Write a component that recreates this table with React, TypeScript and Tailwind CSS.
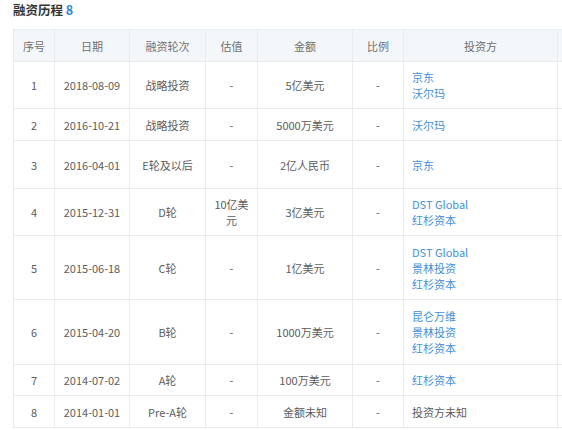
const ROWS = [
  { no: 1, date: "2018-08-09", round: "战略投资", value: "-", amount: "5亿美元", ratio: "-", investors: ["京东", "沃尔玛"], h: "h-[47px]" },
  { no: 2, date: "2016-10-21", round: "战略投资", value: "-", amount: "5000万美元", ratio: "-", investors: ["沃尔玛"], h: "h-[32px]" },
  { no: 3, date: "2016-04-01", round: "E轮及以后", value: "-", amount: "2亿人民币", ratio: "-", investors: ["京东"], h: "h-[48px]" },
  { no: 4, date: "2015-12-31", round: "D轮", value: "10亿美元", amount: "3亿美元", ratio: "-", investors: ["DST Global", "红杉资本"], h: "h-[47px]" },
  { no: 5, date: "2015-06-18", round: "C轮", value: "-", amount: "1亿美元", ratio: "-", investors: ["DST Global", "景林投资", "红杉资本"], h: "h-[64px]" },
  { no: 6, date: "2015-04-20", round: "B轮", value: "-", amount: "1000万美元", ratio: "-", investors: ["昆仑万维", "景林投资", "红杉资本"], h: "h-[65px]" },
  { no: 7, date: "2014-07-02", round: "A轮", value: "-", amount: "100万美元", ratio: "-", investors: ["红杉资本"], h: "h-[31px]" },
  { no: 8, date: "2014-01-01", round: "Pre-A轮", value: "-", amount: "金额未知", ratio: "-", investors: [], h: "h-[32px]" },
];

const HEADERS = ["序号", "日期", "融资轮次", "估值", "金额", "比例", "投资方", ""];
const WIDTHS = ["w-[41px]", "w-[75px]", "w-[76px]", "w-[52px]", "w-[95px]", "w-[51px]", "w-[154px]", "w-[80px]"];

const cell = "border border-[#e8ecef] text-center align-middle";

export default function App() {
  return (
    <div className="w-[562px] h-[430px] overflow-hidden bg-white font-['Noto_Sans_CJK_SC','Noto_Sans',sans-serif] text-[#5c5c5c]">
      <div className="pl-[13px] pt-[1px] h-[29px] text-[12.5px] leading-[18px] font-bold text-[#333]">
        融资历程 <span className="text-[#2a86d1]">8</span>
      </div>
      <div className="pl-[13px]">
        <table className="table-fixed border-collapse w-[624px] text-[11px] leading-[16px]">
          <colgroup>
            {WIDTHS.map((w, i) => (
              <col key={i} className={w} />
            ))}
          </colgroup>
          <thead>
            <tr className="h-[32px] bg-[#f4f7fa] text-[#707070]">
              {HEADERS.map((h, i) => (
                <th key={i} className={`${cell} font-normal`}>
                  {h}
                </th>
              ))}
            </tr>
          </thead>
          <tbody>
            {ROWS.map((r) => (
              <tr key={r.no} className={r.h}>
                <td className={cell}>{r.no}</td>
                <td className={cell}>{r.date}</td>
                <td className={cell}>{r.round}</td>
                <td className={`${cell} px-[6px]`}>{r.value}</td>
                <td className={cell}>{r.amount}</td>
                <td className={cell}>{r.ratio}</td>
                <td className={`${cell} text-left pl-[8px]`}>
                  {r.investors.length === 0 ? (
                    <span>投资方未知</span>
                  ) : (
                    r.investors.map((name) => (
                      <div key={name} className="text-[#3f91d4]">
                        {name}
                      </div>
                    ))
                  )}
                </td>
                <td className={cell}></td>
              </tr>
            ))}
          </tbody>
        </table>
      </div>
    </div>
  );
}
